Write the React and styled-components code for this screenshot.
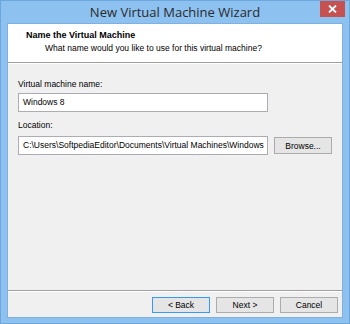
import React from "react";
import styled, { createGlobalStyle } from "styled-components";

const Global = createGlobalStyle`
  html, body { margin: 0; padding: 0; background: #ffffff; }
  * { box-sizing: border-box; }
`;

const Window = styled.div`
  width: 350px;
  height: 324px;
  background: #8dc1f0;
  border: 1px solid #6ea7de;
  display: flex;
  flex-direction: column;
  font-family: "Liberation Sans", Arial, sans-serif;
  color: #000;
`;

const TitleBar = styled.div`
  height: 22px;
  display: grid;
  grid-template-columns: 1fr auto 1fr;
  align-items: start;
  padding: 0 4px 0 4px;
`;

const Title = styled.div`
  grid-column: 2;
  font-family: "Open Sans", "Liberation Sans", sans-serif;
  font-size: 13px;
  line-height: 23px;
  color: #2a2a2a;
  white-space: nowrap;
`;

const CloseBtn = styled.div`
  grid-column: 3;
  justify-self: end;
  width: 25px;
  height: 16px;
  background: #c75050;
  display: flex;
  align-items: center;
  justify-content: center;
`;

const Client = styled.div`
  flex: 1;
  margin: 0 6px 5px 6px;
  border: 1px solid #7fb0e0;
  display: flex;
  flex-direction: column;
  background: #f0f0f0;
`;

const Header = styled.div`
  height: 39px;
  background: #ffffff;
  border-bottom: 1px solid #a0a0a0;
  box-shadow: 0 1px 0 #ffffff;
  padding: 5px 0 0 18px;
`;

const HeaderTitle = styled.div`
  font-size: 9px;
  font-weight: bold;
  line-height: 13px;
`;

const HeaderSub = styled.div`
  font-size: 8.5px;
  line-height: 13px;
  padding-left: 19px;
`;

const Body = styled.div`
  flex: 1;
  padding: 15px 10px 0 10px;
  display: flex;
  flex-direction: column;
`;

const Label = styled.div`
  font-size: 8.5px;
  line-height: 12px;
  margin-bottom: ${(p) => p.$mb ?? 3}px;
  margin-top: ${(p) => p.$mt || 0}px;
`;

const Row = styled.div`
  display: flex;
  align-items: center;
  gap: 6px;
`;

const Input = styled.div`
  width: 250px;
  height: 19px;
  background: #fff;
  border: 1px solid #abadb3;
  font-size: 8.5px;
  line-height: 17px;
  padding: 0 4px;
  white-space: nowrap;
  overflow: hidden;
`;

const Button = styled.div`
  width: 58px;
  height: ${(p) => p.$h || 16}px;
  background: #e5e5e5;
  border: 1px solid ${(p) => (p.$default ? "#3399ff" : "#acacac")};
  font-size: 8.5px;
  display: flex;
  align-items: center;
  justify-content: center;
`;

const Footer = styled.div`
  height: 27px;
  border-top: 1px solid #a0a0a0;
  box-shadow: inset 0 1px 0 #ffffff;
  display: flex;
  justify-content: flex-end;
  align-items: center;
  gap: 6px;
  padding: 1px 4px 0 0;
`;

export default function App() {
  return (
    <>
      <Global />
      <Window>
        <TitleBar>
          <Title>New Virtual Machine Wizard</Title>
          <CloseBtn>
            <svg width="9" height="8" viewBox="0 0 9 8">
              <path d="M1 0.5 L8 7.5 M8 0.5 L1 7.5" stroke="#fff" strokeWidth="1.8" />
            </svg>
          </CloseBtn>
        </TitleBar>
        <Client>
          <Header>
            <HeaderTitle>Name the Virtual Machine</HeaderTitle>
            <HeaderSub>What name would you like to use for this virtual machine?</HeaderSub>
          </Header>
          <Body>
            <Label>Virtual machine name:</Label>
            <Input>Windows 8</Input>
            <Label $mt={7} $mb={5}>Location:</Label>
            <Row>
              <Input>C:\Users\SoftpediaEditor\Documents\Virtual Machines\Windows</Input>
              <Button $h={17}>Browse...</Button>
            </Row>
          </Body>
          <Footer>
            <Button $default>&lt; Back</Button>
            <Button>Next &gt;</Button>
            <Button>Cancel</Button>
          </Footer>
        </Client>
      </Window>
    </>
  );
}
